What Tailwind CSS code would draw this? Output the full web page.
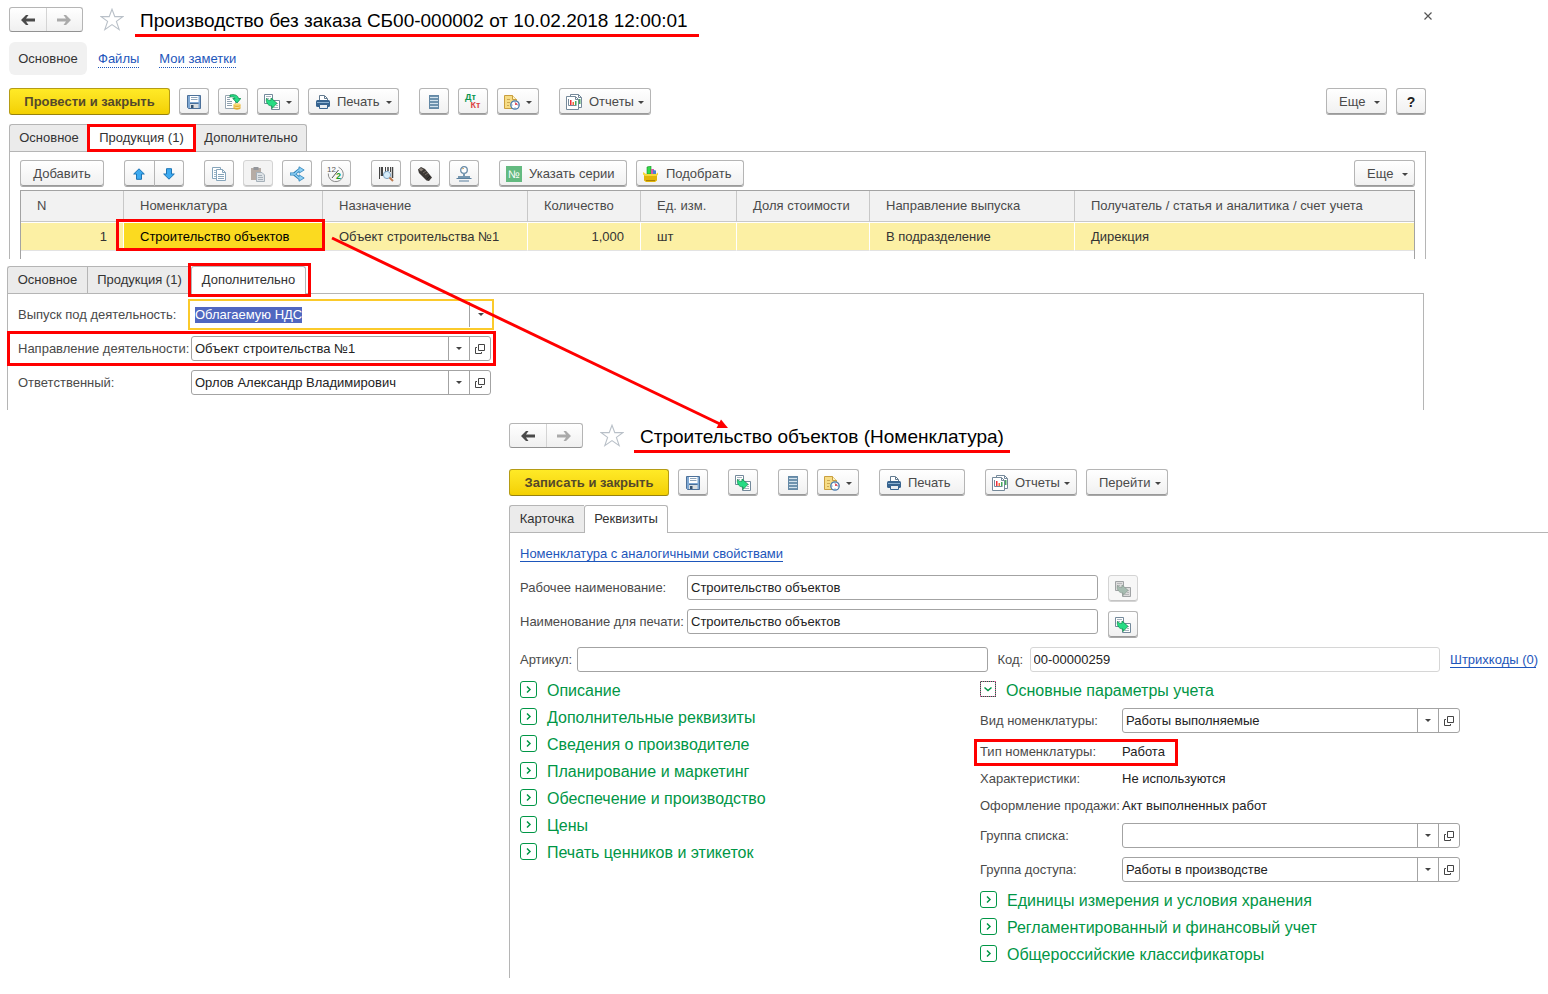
<!DOCTYPE html>
<html lang="ru">
<head>
<meta charset="utf-8">
<title>Производство без заказа СБ00-000002</title>
<script src="https://cdn.jsdelivr.net/npm/@tailwindcss/browser@4"></script>
</head>
<body class="bg-white">
<!-- Icon set -->
<svg class="hidden" aria-hidden="true">
  <symbol id="left" viewBox="0 0 16 12"><path d="M1 6 6 1H8.500L6 4.600H15V7.400H6L8.500 11H6Z" fill="currentColor"/></symbol>
  <symbol id="right" viewBox="0 0 16 12"><path d="M15 6 10 1H7.500L10 4.600H1V7.400H10L7.500 11H10Z" fill="currentColor"/></symbol>
  <symbol id="star" viewBox="0 0 24 23"><path d="M12 1.200 14.800 8.600H22.800L16.400 13.400 19.200 21.600 12 16.600 4.800 21.600 7.600 13.400 1.200 8.600H9.200Z" fill="#fff" stroke="#b9c0c8" stroke-width="1.100"/></symbol>
  <symbol id="caret" viewBox="0 0 6 3"><path d="M0 0H6L3 3Z" fill="#444"/></symbol>
  <symbol id="open" viewBox="0 0 10 10"><path d="M3.500.5H9.500V6.500H3.500ZM2 3.500H.5V9.500H6.500V8" fill="none" stroke="#444"/></symbol>
  <symbol id="save" viewBox="0 0 16 16"><path d="M1.500 1.500H14.500V14.500H2.500L1.500 13.500Z" fill="#7fa8d3" stroke="#4c7099"/><path d="M4 2H12.500V8H4Z" fill="#fff"/><path d="M5 3.500H11.500M5 5.500H11.500" stroke="#8da4ba"/><path d="M4 10H12.500V14H4Z" fill="#d8dde0"/><path d="M4 9.500H12.500" stroke="#4c7099"/><path d="M5 11H7.500V14H5Z" fill="#35516f"/></symbol>
  <symbol id="post" viewBox="0 0 16 16"><path d="M.5 1.500H10.500V14.500H.5Z" fill="#fff" stroke="#98a6b2"/><path d="M2 3.500H5M2 5.500H5M2 7.500H7M2 9.500H7M2 11.500H7" stroke="#8ea0ae"/><path d="M5 1C9 0 13 1 13.500 4.500H15.800L12 9 7.800 4.500H10C9.500 3 7.500 2.500 5 3Z" fill="#26dc84" stroke="#0c8a4b" stroke-width=".8"/><path d="M8.500 10.500V14.500C9 16 15 16 15.500 14.500V10.500Z" fill="#e3ad31"/><ellipse cx="12" cy="10.500" rx="3.500" ry="1.300" fill="#f9d977"/><path d="M8.500 12.500C9.500 13.800 14.500 13.800 15.500 12.500" fill="none" stroke="#fae49a"/></symbol>
  <symbol id="base" viewBox="0 0 16 16"><path d="M.5.5H8.500V9.500H.5Z" fill="#fff" stroke="#73899b"/><path d="M7.500 6.500H15.500V15.500H7.500Z" fill="#fff" stroke="#73899b"/><path d="M2 2.500H7M2 4.500H5M12 9.500H14M12 11.500H14M9.500 13.500H14" stroke="#a6b3bd"/><path d="M2.500 4.500C3.500 6 5 6.500 7 6.300V4L13 9.300 8 14.500V12C4.500 12 1.500 9 2.500 4.500Z" fill="#26dc84" stroke="#14924f" stroke-width=".8"/></symbol>
  <symbol id="print" viewBox="0 0 16 16"><path d="M4.500 7V1.500H9.500L12.500 4.500V7" fill="#fff" stroke="#61798e"/><path d="M9.500 2V4.500H12" fill="none" stroke="#61798e"/><rect x="1" y="6" width="14" height="7" rx="1.500" fill="#36638f"/><path d="M2 8.500H14" stroke="#8ab0d1"/><path d="M4.500 10.500H12.500V14.500H4.500Z" fill="#e8edf2" stroke="#36638f"/></symbol>
  <symbol id="list" viewBox="0 0 16 16"><path d="M3 1H13V15H3Z" fill="#6f93ae"/><path d="M4 3.500H12M4 6.500H12M4 9.500H12M4 12.500H12" stroke="#d3e2ed"/><path d="M3.500 1.500H12.500V14.500H3.500Z" fill="none" stroke="#6488a5"/></symbol>
  <symbol id="clock" viewBox="0 0 16 16"><path d="M.5 1.500H8.500L12.500 5.500V14.500H.5Z" fill="#f6dc85" stroke="#c99e3f"/><path d="M8.500 1.500V5.500H12.500" fill="#fff3c2" stroke="#c99e3f"/><path d="M3 5.500H6M3 8.500H6M3 11.500H5" stroke="#cda851"/><circle cx="11" cy="11" r="4.200" fill="#fff" stroke="#497aac" stroke-width="1.300"/><path d="M11 7.500V8.500M11 13.500V14.500M7.500 11H8.500M13.500 11H14.500" stroke="#497aac"/><path d="M11 11V8.500A2.500 2.500 0 0 1 13.500 11Z" fill="#e05662"/></symbol>
  <symbol id="report" viewBox="0 0 16 16"><path d="M4.500.5H12.500L15.500 3.500V13.500H4.500Z" fill="#fff" stroke="#75899a"/><path d="M12.500.5V3.500H15.500" fill="none" stroke="#75899a"/><path d="M13.500 5V10" stroke="#4bab60" stroke-width="2"/><path d="M.5 2.500H9.500L12.500 5.500V15.500H.5Z" fill="#fff" stroke="#75899a"/><path d="M9.500 2.500V5.500H12.500" fill="none" stroke="#75899a"/><path d="M2.500 5V11.500H10.500" fill="none" stroke="#75899a"/><path d="M4 6H5.500V11H4Z" fill="#ee2e3d"/><path d="M6.500 8H8V11H6.500Z" fill="#f56d37"/><path d="M9 7H10.500V11H9Z" fill="#43ac5d"/></symbol>
  <symbol id="up" viewBox="0 0 12 12"><path d="M6 .8 11.300 6H8.500V11.300H3.500V6H.7Z" fill="#3daaf0" stroke="#1c74b5"/></symbol>
  <symbol id="down" viewBox="0 0 12 12"><path d="M6 11.200 11.300 6H8.500V.7H3.500V6H.7Z" fill="#3daaf0" stroke="#1c74b5"/></symbol>
  <symbol id="copy" viewBox="0 0 16 16"><path d="M1.500 1.500H9.500V12.500H1.500Z" fill="#fff" stroke="#86a5bb"/><path d="M3 4.500H5M3 6.500H5M3 8.500H5M3 10.500H5" stroke="#9fb7c7"/><path d="M5.500 3.500H11.500L14.500 6.500V14.500H5.500Z" fill="#fff" stroke="#86a5bb"/><path d="M11.500 3.500V6.500H14.500M7 8.500H13M7 10.500H13M7 12.500H13" fill="none" stroke="#86a5bb"/></symbol>
  <symbol id="paste" viewBox="0 0 16 16"><path d="M1 2H11V14H1Z" fill="#b6aca5"/><path d="M3.500 1H8.500V4H3.500Z" fill="#93969b"/><path d="M6.500 6.500H12L14.500 9V15.500H6.500Z" fill="#dde2e6" stroke="#a5b0b9"/><path d="M8 9.500H12M8 11.500H13M8 13.500H13" stroke="#a5b0b9"/></symbol>
  <symbol id="split" viewBox="0 0 16 16"><path d="M1 8H5L10 4H12M5 8 10 12H12" fill="none" stroke="#2d83b9" stroke-width="3.200"/><path d="M10 .8 15.200 4 10 7.200ZM10 8.800 15.200 12 10 15.200Z" fill="#8fd0f5" stroke="#2d83b9" stroke-width=".8"/><path d="M1.500 8H5.500L10 4H12M5.500 8 10 12H12" fill="none" stroke="#8fd0f5" stroke-width="1.400"/></symbol>
  <symbol id="half" viewBox="0 0 18 18"><path d="M11.500 2.200A7.500 7.500 0 1 1 1.300 8.500" fill="none" stroke="#8a8a8a"/><path d="M5 13 11.500 5" stroke="#555"/><text x="0" y="7" font-size="8" fill="#555">12</text><text x="9" y="14" font-size="9" font-weight="bold" fill="#169a2a">2</text></symbol>
  <symbol id="barcode" viewBox="0 0 16 16"><path d="M1.500 1V13M4.500 1V10M7.500 1V6M12.500 1V6" stroke="#444"/><path d="M3.500 1V10M10 1V5M14.500 1V12" stroke="#444" stroke-width="1.500"/><circle cx="9" cy="9" r="3.600" fill="#d7edfb" stroke="#7fa4c3"/><path d="M11.500 11.500 15 15" stroke="#bd7a4e" stroke-width="2"/></symbol>
  <symbol id="scanner" viewBox="0 0 16 16"><path d="M1 3.500 4 1 8 3 15 11.500 12 15 9.500 14.500 2 7Z" fill="#3c3835"/><path d="M2 3.500 4 2 6.500 3.500 4 5.500Z" fill="#8b827a"/><path d="M6 7 9 5M8 9 11 7" stroke="#756c64"/><path d="M10 13 13 10" stroke="#222"/></symbol>
  <symbol id="stamp" viewBox="0 0 16 16"><circle cx="8" cy="4" r="3.300" fill="#fff" stroke="#688ba7" stroke-width="1.300"/><path d="M6 3A2 2 0 0 1 8 2.500" fill="none" stroke="#c9a46c"/><path d="M7 7H9V10H14V12H2V10H7Z" fill="#7798b1"/><path d="M.5 12.500H15.500M3 15H13" stroke="#587f9e" stroke-width="1.200"/></symbol>
  <symbol id="box" viewBox="0 0 16 16"><path d="M4 1 8 0V8H4Z" fill="#35d948" stroke="#148f25" stroke-width=".6"/><path d="M8 3H11V8H8Z" fill="#d75ba6"/><path d="M10 4 13 4.500V8H10Z" fill="#4781d1"/><path d="M1 8H14V14.500L12 16H3L1 14.500Z" fill="#e2b508"/><path d="M0 6 3 8H13L15 6.500V9L13 10H2L0 8.500Z" fill="#f7d83a"/><path d="M3 14.500H12" stroke="#a98105"/></symbol>
  <symbol id="closed" viewBox="0 0 17 17"><rect x=".5" y=".5" width="16" height="16" rx="2.500" fill="#fff" stroke="#009646"/><path d="M7 5.500 10 8.500 7 11.500" fill="none" stroke="#009646" stroke-width="1.500"/></symbol>
  <symbol id="opened" viewBox="0 0 17 17"><rect x=".5" y=".5" width="15" height="15" fill="#fff" stroke="#0d7a42"/><path d="M0 .5H16M0 15.500H16M.5 0V16M15.500 0V16" fill="none" stroke="#e0559f" stroke-dasharray="1 1"/><path d="M4.500 6.500 8 9.500 11.500 6.500" fill="none" stroke="#009646" stroke-width="1.500"/></symbol>
</svg>

<main class="relative min-h-screen overflow-hidden pt-[7px] font-['Liberation_Sans',Arial,sans-serif] text-[13px] leading-5 text-[#4a4a4a]">

  <!-- Production document -->
  <section class="pr-[122px] pl-[9px]">
    <header class="flex h-[25px] items-center">
      <div class="flex h-[25px] w-[74px] rounded-[3px] border border-[#b5b5b5] border-b-[#929292] bg-linear-to-b from-white to-[#f0f0f0]">
        <button type="button" aria-label="Назад" class="flex flex-1 items-center justify-center text-[#4a4a4a]"><svg class="h-3 w-4"><use href="#left"/></svg></button>
        <button type="button" aria-label="Вперед" class="flex flex-1 items-center justify-center border-l border-[#d4d4d4] text-[#aaa]"><svg class="h-3 w-4"><use href="#right"/></svg></button>
      </div>
      <button type="button" aria-label="В избранное" class="ml-[17px]"><svg class="h-[23px] w-6"><use href="#star"/></svg></button>
      <h1 class="relative ml-4 pt-[2px] text-[19px] leading-[26px] text-black">Производство без заказа СБ00-000002 от 10.02.2018 12:00:01<span class="absolute -right-[11px] -bottom-[3px] -left-[5px] h-[3px] bg-[#f00]"></span></h1>
      <button type="button" aria-label="Закрыть" class="-mr-[6px] mb-[7px] ml-auto"><svg class="h-2 w-2" viewBox="0 0 8 8"><path d="M.5.5 7.500 7.500M7.500.5.5 7.500" stroke="#555" stroke-width="1.200"/></svg></button>
    </header>

    <nav class="mt-[10px] flex items-center gap-5">
      <span class="-mr-[9px] flex h-[33px] w-[78px] items-center justify-center rounded-md bg-[#f1f1f1] pt-px text-[#333]">Основное</span>
      <a href="#" class="mt-[2px] border-b border-dotted border-[#1d56bb] leading-4 text-[#1d56bb]">Файлы</a>
      <a href="#" class="mt-[2px] border-b border-dotted border-[#1d56bb] leading-4 text-[#1d56bb]">Мои заметки</a>
    </nav>

    <div class="mt-[13px] flex gap-[9px]">
      <button type="button" class="h-[27px] w-[161px] rounded-[3px] border border-[#b59c14] border-b-[#97820e] bg-linear-to-b from-[#ffea26] to-[#f3d000] font-bold text-[#54492a]">Провести и закрыть</button>
      <button type="button" aria-label="Записать" class="flex h-[27px] w-[30px] items-center justify-center rounded-[3px] border border-[#b5b5b5] border-b-[#a8a8a8] bg-linear-to-b from-white to-[#f0f0f0] shadow-[inset_0_-1px_0_#9a9a9a]"><svg class="size-4"><use href="#save"/></svg></button>
      <button type="button" aria-label="Провести" class="flex h-[27px] w-[30px] items-center justify-center rounded-[3px] border border-[#b5b5b5] border-b-[#a8a8a8] bg-linear-to-b from-white to-[#f0f0f0] shadow-[inset_0_-1px_0_#9a9a9a]"><svg class="size-4"><use href="#post"/></svg></button>
      <button type="button" aria-label="Создать на основании" class="flex h-[27px] w-[42px] items-center justify-between rounded-[3px] border border-[#b5b5b5] border-b-[#a8a8a8] bg-linear-to-b from-white to-[#f0f0f0] px-[6px] shadow-[inset_0_-1px_0_#9a9a9a]"><svg class="size-4"><use href="#base"/></svg><svg class="mt-[2px] h-[3px] w-[6px]"><use href="#caret"/></svg></button>
      <button type="button" class="flex h-[27px] w-[91px] items-center rounded-[3px] border border-[#b5b5b5] border-b-[#a8a8a8] bg-linear-to-b from-white to-[#f0f0f0] px-[6px] shadow-[inset_0_-1px_0_#9a9a9a]"><svg class="mr-[6px] size-4"><use href="#print"/></svg>Печать<svg class="mt-[2px] ml-auto h-[3px] w-[6px]"><use href="#caret"/></svg></button>
      <button type="button" aria-label="Реестр" class="ml-[11px] flex h-[27px] w-[30px] items-center justify-center rounded-[3px] border border-[#b5b5b5] border-b-[#a8a8a8] bg-linear-to-b from-white to-[#f0f0f0] shadow-[inset_0_-1px_0_#9a9a9a]"><svg class="size-4"><use href="#list"/></svg></button>
      <button type="button" class="flex h-[27px] w-[30px] flex-col items-center rounded-[3px] border border-[#b5b5b5] border-b-[#a8a8a8] bg-linear-to-b from-white to-[#f0f0f0] pt-1 text-[9px] leading-2 font-bold shadow-[inset_0_-1px_0_#9a9a9a]"><span class="mr-[5px] text-[#0b9550]">Дт</span><span class="ml-[5px] text-[#dc4444]">Кт</span></button>
      <button type="button" aria-label="История" class="flex h-[27px] w-[42px] items-center justify-between rounded-[3px] border border-[#b5b5b5] border-b-[#a8a8a8] bg-linear-to-b from-white to-[#f0f0f0] px-[6px] shadow-[inset_0_-1px_0_#9a9a9a]"><svg class="size-4"><use href="#clock"/></svg><svg class="mt-[2px] h-[3px] w-[6px]"><use href="#caret"/></svg></button>
      <button type="button" class="ml-[11px] flex h-[27px] w-[92px] items-center rounded-[3px] border border-[#b5b5b5] border-b-[#a8a8a8] bg-linear-to-b from-white to-[#f0f0f0] px-[6px] shadow-[inset_0_-1px_0_#9a9a9a]"><svg class="mr-[7px] size-4"><use href="#report"/></svg>Отчеты<svg class="mt-[2px] ml-auto h-[3px] w-[6px]"><use href="#caret"/></svg></button>
      <button type="button" class="ml-auto flex h-[27px] w-[61px] items-center justify-between rounded-[3px] border border-[#b5b5b5] border-b-[#a8a8a8] bg-linear-to-b from-white to-[#f0f0f0] pr-[6px] pl-3 shadow-[inset_0_-1px_0_#9a9a9a]">Еще<svg class="mt-[2px] h-[3px] w-[6px]"><use href="#caret"/></svg></button>
      <button type="button" class="h-[27px] w-[30px] rounded-[3px] border border-[#b5b5b5] border-b-[#a8a8a8] bg-linear-to-b from-white to-[#f0f0f0] text-[14px] font-bold text-[#222] shadow-[inset_0_-1px_0_#9a9a9a]">?</button>
    </div>

    <div role="tablist" class="mt-[9px] flex text-[#333]">
      <button type="button" role="tab" class="h-[27px] w-[79px] rounded-tl-[3px] border border-r-0 border-b-0 border-[#b5b5b5] bg-[#ebebeb]">Основное</button>
      <button type="button" role="tab" aria-selected="true" class="relative -mb-px h-7 w-[107px] bg-white">Продукция (1)<span class="absolute -inset-x-px top-0 bottom-0 border-3 border-[#f00]"></span></button>
      <button type="button" role="tab" class="h-[27px] w-[112px] rounded-tr-[3px] border border-b-0 border-[#b5b5b5] bg-[#ebebeb]">Дополнительно</button>
    </div>

    <div class="border border-b-0 border-[#b5b5b5] px-[10px] pt-2">
      <div class="flex gap-[9px]">
        <button type="button" class="h-[27px] w-[84px] rounded-[3px] border border-[#b5b5b5] border-b-[#a8a8a8] bg-linear-to-b from-white to-[#f0f0f0] shadow-[inset_0_-1px_0_#9a9a9a]">Добавить</button>
        <div class="ml-[11px] flex h-[27px] w-[60px] rounded-[3px] border border-[#b5b5b5] border-b-[#a8a8a8] bg-linear-to-b from-white to-[#f0f0f0] shadow-[inset_0_-1px_0_#9a9a9a]">
          <button type="button" aria-label="Вверх" class="flex flex-1 items-center justify-center"><svg class="size-3"><use href="#up"/></svg></button>
          <button type="button" aria-label="Вниз" class="flex flex-1 items-center justify-center border-l border-[#b5b5b5]"><svg class="size-3"><use href="#down"/></svg></button>
        </div>
        <button type="button" aria-label="Копировать" class="ml-[11px] flex h-[27px] w-[30px] items-center justify-center rounded-[3px] border border-[#b5b5b5] border-b-[#a8a8a8] bg-linear-to-b from-white to-[#f0f0f0] shadow-[inset_0_-1px_0_#9a9a9a]"><svg class="size-4"><use href="#copy"/></svg></button>
        <button type="button" disabled aria-label="Вставить" class="flex h-[27px] w-[30px] items-center justify-center rounded-[3px] border border-[#d4d4d4] bg-[#f3f3f3] shadow-[inset_0_-1px_0_#c4c4c4]"><svg class="size-4"><use href="#paste"/></svg></button>
        <button type="button" aria-label="Разбить строку" class="flex h-[27px] w-[30px] items-center justify-center rounded-[3px] border border-[#b5b5b5] border-b-[#a8a8a8] bg-linear-to-b from-white to-[#f0f0f0] shadow-[inset_0_-1px_0_#9a9a9a]"><svg class="size-4"><use href="#split"/></svg></button>
        <button type="button" aria-label="Заполнить доли" class="flex h-[27px] w-[30px] items-center justify-center rounded-[3px] border border-[#b5b5b5] border-b-[#a8a8a8] bg-linear-to-b from-white to-[#f0f0f0] shadow-[inset_0_-1px_0_#9a9a9a]"><svg class="size-[18px]"><use href="#half"/></svg></button>
        <button type="button" aria-label="Поиск по штрихкоду" class="ml-[11px] flex h-[27px] w-[30px] items-center justify-center rounded-[3px] border border-[#b5b5b5] border-b-[#a8a8a8] bg-linear-to-b from-white to-[#f0f0f0] shadow-[inset_0_-1px_0_#9a9a9a]"><svg class="size-4"><use href="#barcode"/></svg></button>
        <button type="button" aria-label="Терминал" class="flex h-[27px] w-[30px] items-center justify-center rounded-[3px] border border-[#b5b5b5] border-b-[#a8a8a8] bg-linear-to-b from-white to-[#f0f0f0] shadow-[inset_0_-1px_0_#9a9a9a]"><svg class="size-4"><use href="#scanner"/></svg></button>
        <button type="button" aria-label="Весы" class="flex h-[27px] w-[30px] items-center justify-center rounded-[3px] border border-[#b5b5b5] border-b-[#a8a8a8] bg-linear-to-b from-white to-[#f0f0f0] shadow-[inset_0_-1px_0_#9a9a9a]"><svg class="size-4"><use href="#stamp"/></svg></button>
        <button type="button" class="ml-[11px] flex h-[27px] w-32 items-center rounded-[3px] border border-[#b5b5b5] border-b-[#a8a8a8] bg-linear-to-b from-white to-[#f0f0f0] px-[6px] shadow-[inset_0_-1px_0_#9a9a9a]"><span class="mr-[7px] flex size-4 items-center justify-center bg-[#63ba80] text-[11px] text-white">№</span>Указать серии</button>
        <button type="button" class="flex h-[27px] w-[108px] items-center rounded-[3px] border border-[#b5b5b5] border-b-[#a8a8a8] bg-linear-to-b from-white to-[#f0f0f0] px-[6px] shadow-[inset_0_-1px_0_#9a9a9a]"><svg class="mr-[7px] size-4"><use href="#box"/></svg>Подобрать</button>
        <button type="button" class="ml-auto flex h-[27px] w-[61px] items-center justify-between rounded-[3px] border border-[#b5b5b5] border-b-[#a8a8a8] bg-linear-to-b from-white to-[#f0f0f0] pr-[6px] pl-3 shadow-[inset_0_-1px_0_#9a9a9a]">Еще<svg class="mt-[2px] h-[3px] w-[6px]"><use href="#caret"/></svg></button>
      </div>

      <div class="mt-[3px] border border-b-0 border-[#a3a3a3] pb-2">
        <table class="w-full table-fixed border-separate border-spacing-0">
          <colgroup><col class="w-[102px]"><col class="w-[199px]"><col class="w-[205px]"><col class="w-[113px]"><col class="w-[96px]"><col class="w-[133px]"><col class="w-[205px]"><col></colgroup>
          <thead>
            <tr class="h-[31px] bg-[#f2f2f2] text-left">
              <th class="border-b border-[#c8c8c8] p-0 pl-4 font-normal">N</th>
              <th class="border-b border-l border-[#c8c8c8] p-0 pl-4 font-normal">Номенклатура</th>
              <th class="border-b border-l border-[#c8c8c8] p-0 pl-4 font-normal">Назначение</th>
              <th class="border-b border-l border-[#c8c8c8] p-0 pl-4 font-normal">Количество</th>
              <th class="border-b border-l border-[#c8c8c8] p-0 pl-4 font-normal">Ед. изм.</th>
              <th class="border-b border-l border-[#c8c8c8] p-0 pl-4 font-normal">Доля стоимости</th>
              <th class="border-b border-l border-[#c8c8c8] p-0 pl-4 font-normal">Направление выпуска</th>
              <th class="border-b border-l border-[#c8c8c8] p-0 pl-4 font-normal">Получатель / статья и аналитика / счет учета</th>
            </tr>
          </thead>
          <tbody>
            <tr class="h-[29px] bg-[#fcf0a4] text-[#333]">
              <td class="border-y border-t-white border-b-[#e3e3e3] p-0 pr-4 text-right">1</td>
              <td class="relative border-y border-l border-t-white border-b-[#e3e3e3] border-l-white bg-[#fbda20] p-0 pl-4 text-black">Строительство объектов<span class="absolute -top-1 -right-[3px] -bottom-px -left-2 z-10 border-3 border-[#f00]"></span></td>
              <td class="border-y border-l border-t-white border-b-[#e3e3e3] border-l-white p-0 pl-4">Объект строительства №1</td>
              <td class="border-y border-l border-t-white border-b-[#e3e3e3] border-l-white p-0 pr-4 text-right">1,000</td>
              <td class="border-y border-l border-t-white border-b-[#e3e3e3] border-l-white p-0 pl-4">шт</td>
              <td class="border-y border-l border-t-white border-b-[#e3e3e3] border-l-white p-0"></td>
              <td class="border-y border-l border-t-white border-b-[#e3e3e3] border-l-white p-0 pl-4">В подразделение</td>
              <td class="border-y border-l border-t-white border-b-[#e3e3e3] border-l-white p-0 pl-4">Дирекция</td>
            </tr>
          </tbody>
        </table>
      </div>
    </div>
  </section>

  <!-- Additional details of the same document -->
  <section class="mt-[7px] pr-[124px] pl-[7px]">
    <div role="tablist" class="flex text-[#333]">
      <button type="button" role="tab" class="h-[27px] w-20 rounded-tl-[3px] border border-r-0 border-b-0 border-[#b5b5b5] bg-[#ebebeb]">Основное</button>
      <button type="button" role="tab" class="h-[27px] w-[104px] border border-r-0 border-b-0 border-[#b5b5b5] bg-[#ebebeb]">Продукция (1)</button>
      <button type="button" role="tab" aria-selected="true" class="relative z-10 -mb-px h-7 w-[115px] rounded-t-[3px] border border-b-0 border-[#b5b5b5] bg-white pb-px">Дополнительно<span class="absolute -top-1 -right-[6px] -bottom-[3px] -left-1 border-3 border-[#f00]"></span></button>
    </div>
    <div class="flex flex-col gap-[9px] border border-b-0 border-[#b5b5b5] pt-2 pb-[15px] pl-[10px]">
      <div class="flex items-center">
        <label for="vat" class="w-[173px]">Выпуск под деятельность:</label>
        <div class="flex h-[25px] w-[300px] items-center outline-2 outline-offset-1 outline-[#fbca2b]">
          <input id="vat" value="Облагаемую НДС" class="h-4 min-w-0 flex-1 pl-1 leading-4 text-[#222] outline-none selection:bg-[#5067c0] selection:text-white">
          <button type="button" aria-label="Выбрать" class="flex h-[25px] w-[22px] items-center justify-center border-l border-[#a3a3a3]"><svg class="h-[3px] w-[6px]"><use href="#caret"/></svg></button>
        </div>
      </div>
      <div class="relative flex items-center">
        <span class="absolute -top-[5px] -bottom-[5px] -left-[11px] w-[489px] border-3 border-[#f00]"></span>
        <label for="direction" class="w-[173px]">Направление деятельности:</label>
        <div class="flex h-[25px] w-[300px] rounded-[3px] border border-[#a3a3a3]">
          <input id="direction" value="Объект строительства №1" class="min-w-0 flex-1 pl-[3px] text-[#222]">
          <button type="button" aria-label="Выбрать" class="flex w-[21px] items-center justify-center border-l border-[#a3a3a3]"><svg class="h-[3px] w-[6px]"><use href="#caret"/></svg></button>
          <button type="button" aria-label="Открыть" class="flex w-[21px] items-center justify-center border-l border-[#a3a3a3]"><svg class="size-[10px]"><use href="#open"/></svg></button>
        </div>
      </div>
      <div class="flex items-center">
        <label for="owner" class="w-[173px]">Ответственный:</label>
        <div class="flex h-[25px] w-[300px] rounded-[3px] border border-[#a3a3a3]">
          <input id="owner" value="Орлов Александр Владимирович" class="min-w-0 flex-1 pl-[3px] text-[#222]">
          <button type="button" aria-label="Выбрать" class="flex w-[21px] items-center justify-center border-l border-[#a3a3a3]"><svg class="h-[3px] w-[6px]"><use href="#caret"/></svg></button>
          <button type="button" aria-label="Открыть" class="flex w-[21px] items-center justify-center border-l border-[#a3a3a3]"><svg class="size-[10px]"><use href="#open"/></svg></button>
        </div>
      </div>
    </div>
  </section>

  <!-- Item card -->
  <section class="mt-[13px] pl-[509px]">
    <header class="flex h-[25px] items-center">
      <div class="flex h-[25px] w-[74px] rounded-[3px] border border-[#b5b5b5] border-b-[#929292] bg-linear-to-b from-white to-[#f0f0f0]">
        <button type="button" aria-label="Назад" class="flex flex-1 items-center justify-center text-[#4a4a4a]"><svg class="h-3 w-4"><use href="#left"/></svg></button>
        <button type="button" aria-label="Вперед" class="flex flex-1 items-center justify-center border-l border-[#d4d4d4] text-[#aaa]"><svg class="h-3 w-4"><use href="#right"/></svg></button>
      </div>
      <button type="button" aria-label="В избранное" class="ml-[17px]"><svg class="h-[23px] w-6"><use href="#star"/></svg></button>
      <h2 class="relative ml-4 pt-[2px] text-[19px] leading-[26px] text-black">Строительство объектов (Номенклатура)<span class="absolute -right-[6px] -bottom-[3px] -left-[6px] h-[3px] bg-[#f00]"></span></h2>
    </header>

    <div class="mt-[21px] flex gap-[9px]">
      <button type="button" class="h-[27px] w-40 rounded-[3px] border border-[#b59c14] border-b-[#97820e] bg-linear-to-b from-[#ffea26] to-[#f3d000] font-bold text-[#54492a]">Записать и закрыть</button>
      <button type="button" aria-label="Записать" class="flex h-[27px] w-[30px] items-center justify-center rounded-[3px] border border-[#b5b5b5] border-b-[#a8a8a8] bg-linear-to-b from-white to-[#f0f0f0] shadow-[inset_0_-1px_0_#9a9a9a]"><svg class="size-4"><use href="#save"/></svg></button>
      <button type="button" aria-label="Создать на основании" class="ml-[11px] flex h-[27px] w-[30px] items-center justify-center rounded-[3px] border border-[#b5b5b5] border-b-[#a8a8a8] bg-linear-to-b from-white to-[#f0f0f0] shadow-[inset_0_-1px_0_#9a9a9a]"><svg class="size-4"><use href="#base"/></svg></button>
      <button type="button" aria-label="Реестр" class="ml-[11px] flex h-[27px] w-[30px] items-center justify-center rounded-[3px] border border-[#b5b5b5] border-b-[#a8a8a8] bg-linear-to-b from-white to-[#f0f0f0] shadow-[inset_0_-1px_0_#9a9a9a]"><svg class="size-4"><use href="#list"/></svg></button>
      <button type="button" aria-label="История" class="flex h-[27px] w-[42px] items-center justify-between rounded-[3px] border border-[#b5b5b5] border-b-[#a8a8a8] bg-linear-to-b from-white to-[#f0f0f0] px-[6px] shadow-[inset_0_-1px_0_#9a9a9a]"><svg class="size-4"><use href="#clock"/></svg><svg class="mt-[2px] h-[3px] w-[6px]"><use href="#caret"/></svg></button>
      <button type="button" class="ml-[11px] flex h-[27px] w-[86px] items-center rounded-[3px] border border-[#b5b5b5] border-b-[#a8a8a8] bg-linear-to-b from-white to-[#f0f0f0] px-[6px] shadow-[inset_0_-1px_0_#9a9a9a]"><svg class="mr-[6px] size-4"><use href="#print"/></svg>Печать</button>
      <button type="button" class="ml-[11px] flex h-[27px] w-[92px] items-center rounded-[3px] border border-[#b5b5b5] border-b-[#a8a8a8] bg-linear-to-b from-white to-[#f0f0f0] px-[6px] shadow-[inset_0_-1px_0_#9a9a9a]"><svg class="mr-[7px] size-4"><use href="#report"/></svg>Отчеты<svg class="mt-[2px] ml-auto h-[3px] w-[6px]"><use href="#caret"/></svg></button>
      <button type="button" class="flex h-[27px] w-[82px] items-center justify-between rounded-[3px] border border-[#b5b5b5] border-b-[#a8a8a8] bg-linear-to-b from-white to-[#f0f0f0] pr-[6px] pl-3 shadow-[inset_0_-1px_0_#9a9a9a]">Перейти<svg class="mt-[2px] h-[3px] w-[6px]"><use href="#caret"/></svg></button>
    </div>

    <div role="tablist" class="mt-[9px] flex text-[#333]">
      <button type="button" role="tab" class="h-[27px] w-[75px] rounded-tl-[3px] border border-r-0 border-b-0 border-[#b5b5b5] bg-[#ebebeb]">Карточка</button>
      <button type="button" role="tab" aria-selected="true" class="relative z-10 -mb-px h-7 w-[84px] rounded-t-[3px] border border-b-0 border-[#b5b5b5] bg-white pb-px">Реквизиты</button>
    </div>

    <div class="border-t border-l border-[#b5b5b5] pt-[10px] pr-3 pb-[11px] pl-[10px]">
      <div class="flex h-5 items-end pb-px"><a href="#" class="border-b border-[#1d56bb] leading-[15px] text-[#1d56bb]">Номенклатура с аналогичными свойствами</a></div>

      <div class="mt-3 flex gap-[10px]">
        <div class="flex flex-col gap-[9px]">
          <div class="flex items-center"><label for="name" class="w-[167px]">Рабочее наименование:</label><input id="name" value="Строительство объектов" class="h-[25px] w-[411px] rounded-[3px] border border-[#a3a3a3] pl-[3px] text-[#222]"></div>
          <div class="flex items-center"><label for="print-name" class="w-[167px]">Наименование для печати:</label><input id="print-name" value="Строительство объектов" class="h-[25px] w-[411px] rounded-[3px] border border-[#a3a3a3] pl-[3px] text-[#222]"></div>
        </div>
        <div class="flex flex-col gap-[9px]">
          <button type="button" disabled aria-label="Заполнить рабочее наименование" class="flex h-[27px] w-[30px] items-center justify-center rounded-[3px] border border-[#d4d4d4] bg-[#f7f7f7] shadow-[inset_0_-1px_0_#c4c4c4]"><svg class="size-4 opacity-60 brightness-80 grayscale-75"><use href="#base"/></svg></button>
          <button type="button" aria-label="Заполнить наименование для печати" class="flex h-[27px] w-[30px] items-center justify-center rounded-[3px] border border-[#b5b5b5] border-b-[#a8a8a8] bg-linear-to-b from-white to-[#f0f0f0] shadow-[inset_0_-1px_0_#9a9a9a]"><svg class="size-4"><use href="#base"/></svg></button>
        </div>
      </div>

      <div class="mt-[9px] flex items-center">
        <label for="article" class="w-[57px]">Артикул:</label>
        <input id="article" class="h-[25px] min-w-0 flex-1 rounded-[3px] border border-[#a3a3a3] pl-[3px] text-[#222]">
        <label for="code" class="ml-[10px] w-8">Код:</label>
        <input id="code" readonly value="00-00000259" class="h-[25px] min-w-0 flex-1 rounded-[3px] border border-[#d6d6d6] pl-[3px] text-[#222]">
        <a href="#" class="ml-[10px] w-[86px] border-b border-[#1d56bb] leading-[15px] whitespace-nowrap text-[#1d56bb]">Штрихкоды (0)</a>
      </div>

      <div class="mt-1 grid grid-cols-[460px_1fr]">
        <div class="flex flex-col items-start text-[16px] text-[#009646]">
          <button type="button" class="flex h-[27px] items-center gap-[10px]"><svg class="size-[17px]"><use href="#closed"/></svg><span class="pt-[2px]">Описание</span></button>
          <button type="button" class="flex h-[27px] items-center gap-[10px]"><svg class="size-[17px]"><use href="#closed"/></svg><span class="pt-[2px]">Дополнительные реквизиты</span></button>
          <button type="button" class="flex h-[27px] items-center gap-[10px]"><svg class="size-[17px]"><use href="#closed"/></svg><span class="pt-[2px]">Сведения о производителе</span></button>
          <button type="button" class="flex h-[27px] items-center gap-[10px]"><svg class="size-[17px]"><use href="#closed"/></svg><span class="pt-[2px]">Планирование и маркетинг</span></button>
          <button type="button" class="flex h-[27px] items-center gap-[10px]"><svg class="size-[17px]"><use href="#closed"/></svg><span class="pt-[2px]">Обеспечение и производство</span></button>
          <button type="button" class="flex h-[27px] items-center gap-[10px]"><svg class="size-[17px]"><use href="#closed"/></svg><span class="pt-[2px]">Цены</span></button>
          <button type="button" class="flex h-[27px] items-center gap-[10px]"><svg class="size-[17px]"><use href="#closed"/></svg><span class="pt-[2px]">Печать ценников и этикеток</span></button>
        </div>
        <div>
          <button type="button" aria-expanded="true" class="flex h-[27px] items-center gap-[9px] text-[16px] text-[#009646]"><svg class="size-[17px]"><use href="#opened"/></svg><span class="pt-[2px]">Основные параметры учета</span></button>
          <div class="mt-[5px] flex items-center">
            <label for="kind" class="w-[142px]">Вид номенклатуры:</label>
            <div class="flex h-[25px] w-[338px] rounded-[3px] border border-[#a3a3a3]">
              <input id="kind" value="Работы выполняемые" class="min-w-0 flex-1 pl-[3px] text-[#222]">
              <button type="button" aria-label="Выбрать" class="flex w-[21px] items-center justify-center border-l border-[#a3a3a3]"><svg class="h-[3px] w-[6px]"><use href="#caret"/></svg></button>
              <button type="button" aria-label="Открыть" class="flex w-[21px] items-center justify-center border-l border-[#a3a3a3]"><svg class="size-[10px]"><use href="#open"/></svg></button>
            </div>
          </div>
          <dl class="mt-[5px]">
            <div class="relative flex h-[27px] items-center"><dt class="w-[142px]">Тип номенклатуры:</dt><dd class="text-[#222]">Работа</dd><dd aria-hidden="true" class="absolute top-px -bottom-px -left-[6px] w-[204px] border-3 border-[#f00]"></dd></div>
            <div class="flex h-[27px] items-center"><dt class="w-[142px]">Характеристики:</dt><dd class="text-[#222]">Не используются</dd></div>
            <div class="flex h-[27px] items-center"><dt class="w-[142px]">Оформление продажи:</dt><dd class="text-[#222]">Акт выполненных работ</dd></div>
          </dl>
          <div class="mt-1 flex items-center">
            <label for="list-group" class="w-[142px]">Группа списка:</label>
            <div class="flex h-[25px] w-[338px] rounded-[3px] border border-[#a3a3a3]">
              <input id="list-group" class="min-w-0 flex-1 pl-[3px] text-[#222]">
              <button type="button" aria-label="Выбрать" class="flex w-[21px] items-center justify-center border-l border-[#a3a3a3]"><svg class="h-[3px] w-[6px]"><use href="#caret"/></svg></button>
              <button type="button" aria-label="Открыть" class="flex w-[21px] items-center justify-center border-l border-[#a3a3a3]"><svg class="size-[10px]"><use href="#open"/></svg></button>
            </div>
          </div>
          <div class="mt-[9px] flex items-center">
            <label for="access-group" class="w-[142px]">Группа доступа:</label>
            <div class="flex h-[25px] w-[338px] rounded-[3px] border border-[#a3a3a3]">
              <input id="access-group" value="Работы в производстве" class="min-w-0 flex-1 pl-[3px] text-[#222]">
              <button type="button" aria-label="Выбрать" class="flex w-[21px] items-center justify-center border-l border-[#a3a3a3]"><svg class="h-[3px] w-[6px]"><use href="#caret"/></svg></button>
              <button type="button" aria-label="Открыть" class="flex w-[21px] items-center justify-center border-l border-[#a3a3a3]"><svg class="size-[10px]"><use href="#open"/></svg></button>
            </div>
          </div>
          <div class="mt-1 flex flex-col items-start text-[16px] text-[#009646]">
            <button type="button" class="flex h-[27px] items-center gap-[10px]"><svg class="size-[17px]"><use href="#closed"/></svg><span class="pt-[2px]">Единицы измерения и условия хранения</span></button>
            <button type="button" class="flex h-[27px] items-center gap-[10px]"><svg class="size-[17px]"><use href="#closed"/></svg><span class="pt-[2px]">Регламентированный и финансовый учет</span></button>
            <button type="button" class="flex h-[27px] items-center gap-[10px]"><svg class="size-[17px]"><use href="#closed"/></svg><span class="pt-[2px]">Общероссийские классификаторы</span></button>
          </div>
        </div>
      </div>
    </div>
  </section>

  <!-- Arrow from the table row to the item card -->
  <svg class="pointer-events-none absolute top-[230px] left-[325px] z-20 h-[205px] w-[410px]" viewBox="0 0 410 205" aria-hidden="true">
    <path d="M7 8 395 194" stroke="#f00" stroke-width="3"/>
    <path d="M403 198 396 189.500 391.500 198Z" fill="#f00"/>
  </svg>
</main>
<script>
  const vat = document.getElementById('vat');
  vat.focus({ preventScroll: true });
  vat.select();
</script>
</body>
</html>
